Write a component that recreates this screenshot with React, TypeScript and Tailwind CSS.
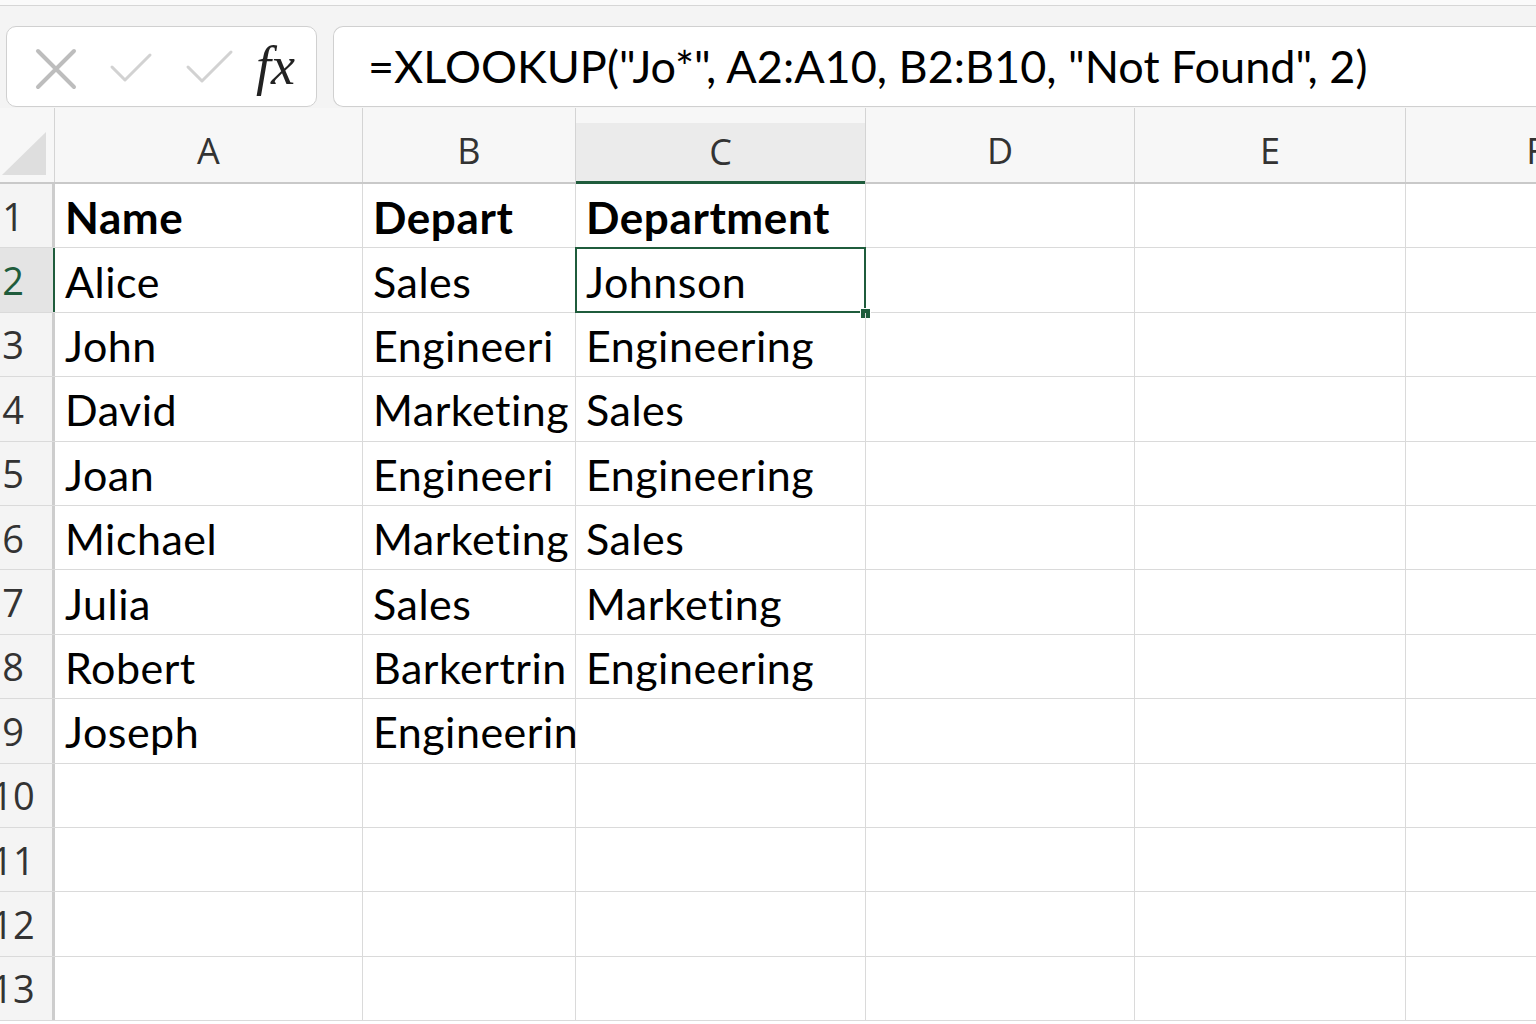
import React from "react";

const cols = [
  { key: "A", w: 308 },
  { key: "B", w: 213 },
  { key: "C", w: 290 },
  { key: "D", w: 269 },
  { key: "E", w: 271 },
  { key: "F", w: 260 },
];

const data: string[][] = [
  ["Name", "Depart", "Department"],
  ["Alice", "Sales", "Johnson"],
  ["John", "Engineeri", "Engineering"],
  ["David", "Marketing", "Sales"],
  ["Joan", "Engineeri", "Engineering"],
  ["Michael", "Marketing", "Sales"],
  ["Julia", "Sales", "Marketing"],
  ["Robert", "Barkertrin", "Engineering"],
  ["Joseph", "Engineering", ""],
  ["", "", ""],
  ["", "", ""],
  ["", "", ""],
  ["", "", ""],
];

const cellFont = { fontFamily: "Lato, 'Open Sans', sans-serif" };

export default function App() {
  return (
    <div className="w-[1536px] h-[1024px] overflow-hidden bg-white relative" style={cellFont}>
      {/* toolbar */}
      <div className="h-[108px] bg-white">
        <div className="h-[5px] bg-[#fafafa]" />
        <div className="h-[103px] bg-[#f4f4f4] border-t border-[#d6d6d6] flex items-start pt-[20px]">
          <div className="ml-[6px] w-[311px] h-[81px] rounded-[10px] border border-[#d0d0d0] bg-white relative shrink-0">
            <svg className="absolute left-0 top-0" width="311" height="81" viewBox="0 0 311 81">
              <path d="M31 24 L67 60 M67 24 L31 60" stroke="#bdbdbd" strokeWidth="4" strokeLinecap="round" fill="none" />
              <path d="M105 40 L118 53 L143 28" stroke="#d2d2d2" strokeWidth="3" strokeLinecap="round" strokeLinejoin="round" fill="none" />
              <path d="M181 40 L195 54 L224 25" stroke="#d2d2d2" strokeWidth="3" strokeLinecap="round" strokeLinejoin="round" fill="none" />
            </svg>
            <div
              className="absolute left-[249px] top-[12px] text-[54px] leading-none italic text-[#222]"
              style={{ fontFamily: "'Liberation Serif', 'DejaVu Serif', serif" }}
            >
              fx
            </div>
          </div>
          <div className="ml-[16px] flex-1 h-[81px] rounded-l-[10px] border border-r-0 border-[#d0d0d0] bg-white flex items-center pl-[34px]">
            <span className="text-[45px] leading-none text-black whitespace-nowrap" style={{ fontFamily: "Lato, sans-serif" }}>
              =XLOOKUP("Jo*", A2:A10, B2:B10, "Not Found", 2)
            </span>
          </div>
        </div>
      </div>

      {/* column headers */}
      <div className="flex h-[76px] bg-[#f7f7f7] border-b-2 border-[#c9c9c9]" style={{ fontFamily: "'Open Sans', sans-serif" }}>
        <div className="w-[55px] shrink-0 relative border-r border-[#d4d4d4]">
          <svg className="absolute left-0 top-0" width="55" height="74" viewBox="0 0 55 74">
            <polygon points="2,67 46,67 46,24" fill="#dedede" />
          </svg>
        </div>
        {cols.map((c) => (
          <div
            key={c.key}
            className={
              c.key === "C"
                ? "shrink-0 border-r border-[#d4d4d4] flex flex-col justify-end"
                : "shrink-0 border-r border-[#d4d4d4] flex items-center justify-center pt-[12px] text-[36px] text-[#333]"
            }
            style={{ width: c.w }}
          >
            {c.key === "C" ? (
              <div className="h-[61px] bg-[#ebebeb] border-b-[3px] border-[#1f5c3c] mb-[-2px] flex items-center justify-center text-[36px] text-[#333] leading-none">
                C
              </div>
            ) : (
              <span className="leading-none">{c.key}</span>
            )}
          </div>
        ))}
      </div>

      {/* rows */}
      <div>
        {data.map((row, i) => {
          const rn = i + 1;
          const sel = rn === 2;
          return (
            <div key={rn} className="flex h-[64.4px] border-b border-[#dadada] box-border">
              <div
                className={
                  sel
                    ? "w-[55px] shrink-0 bg-[#e4e4e4] border-r-[2px] border-[#1f5c3c] flex items-center"
                    : "w-[55px] shrink-0 bg-[#f4f4f4] border-r-[3px] border-[#cdcdcd] flex items-center"
                }
              >
                <div
                  className={
                    "w-[26px] flex justify-center overflow-visible text-[38px] leading-none whitespace-nowrap " +
                    (sel ? "text-[#1f5c3c]" : "text-[#333]")
                  }
                  style={{ fontFamily: "'Open Sans', sans-serif" }}
                >
                  {rn}
                </div>
              </div>
              {cols.map((c, ci) => {
                const v = row[ci] ?? "";
                const isSel = rn === 2 && c.key === "C";
                return (
                  <div
                    key={c.key}
                    className="shrink-0 border-r border-[#dadada] relative"
                    style={{ width: c.w }}
                  >
                    <div
                      className={
                        "h-full flex items-center overflow-hidden whitespace-nowrap leading-none text-black pl-[10px] pt-[2px] " +
                        (rn === 1 ? "font-bold text-[44px] tracking-[0.6px]" : "text-[43px] tracking-[0.5px]")
                      }
                    >
                      {v}
                    </div>
                    {isSel && (
                      <>
                        <div className="absolute left-[-1px] top-[-1px] right-[-1px] bottom-[-1px] border-[2px] border-[#1f5c3c] pointer-events-none" />
                        <div className="absolute right-[-6px] bottom-[-7px] w-[11px] h-[11px] bg-[#1f5c3c] border border-white" />
                      </>
                    )}
                  </div>
                );
              })}
            </div>
          );
        })}
      </div>
    </div>
  );
}
